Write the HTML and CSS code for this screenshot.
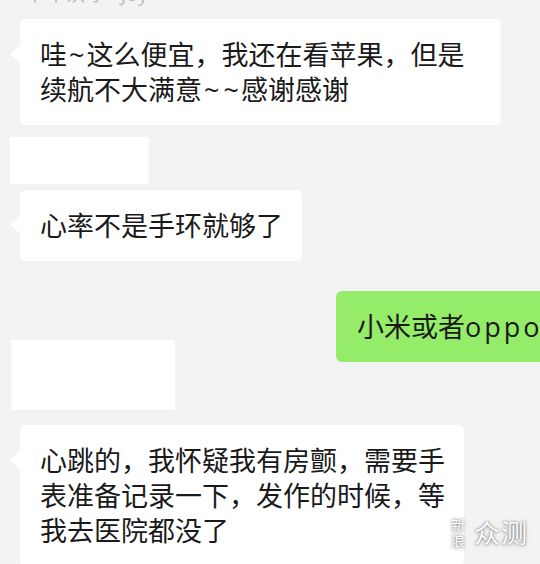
FILE: index.html
```html
<!DOCTYPE html>
<html lang="zh-CN">
<head>
  <meta charset="UTF-8">
  <meta name="viewport" content="width=device-width, initial-scale=1.0">
  <title>聊天记录</title>
  <link rel="stylesheet" href="styles.css">
</head>
<body>
  <div class="chat">
    <div class="nick">十年饮冰 · Joy</div>

    <div class="row">
      <div class="bubble bubble-roomy">哇<span class="tilde">~</span>这么便宜，我还在看苹果，但是<br>续航不大满意<span class="tilde">~</span><span class="tilde">~</span>感谢感谢</div>
    </div>

    <div class="mask mask-first"></div>

    <div class="row row-near">
      <div class="bubble">心率不是手环就够了</div>
    </div>

    <div class="row row-mixed">
      <div class="mask mask-second"></div>
      <div class="bubble bubble-mine">小米或者<span class="latin">oppo</span></div>
    </div>

    <div class="row row-last">
      <div class="bubble">心跳的，我怀疑我有房颤，需要手<br>表准备记录一下，发作的时候，等<br>我去医院都没了</div>
    </div>
  </div>

  <div class="watermark">
    <span class="wm-small">新<br>浪</span>
    <span class="wm-big">众测</span>
  </div>
</body>
</html>
```

FILE: styles.css
```css
body {
  margin: 0;
  padding: 0;
  width: 540px;
  height: 564px;
  overflow: hidden;
  background: #f3f3f3;
  font-family: "Open Sans", "Noto Sans CJK SC", sans-serif;
  color: #1a1a1a;
  position: relative;
}

.chat {
  display: flex;
  flex-direction: column;
}

.nick {
  margin-top: -17px;
  padding-left: 25px;
  font-size: 20px;
  line-height: 22px;
  color: #bdbdbd;
  white-space: nowrap;
}

.row {
  display: flex;
  align-items: flex-start;
  padding-left: 20px;
  margin-top: 14px;
}

.row-near {
  margin-top: 6px;
}

.row-mixed {
  padding-left: 11px;
  margin-top: 30px;
}

.row-last {
  margin-top: 15px;
}

.bubble {
  position: relative;
  background: #fff;
  border-radius: 6px;
  padding: 18px 19px 18px 20px;
  font-size: 27px;
  line-height: 35px;
  white-space: nowrap;
}

.bubble::before {
  content: "";
  position: absolute;
  left: -10px;
  top: 26px;
  border-top: 9px solid transparent;
  border-bottom: 9px solid transparent;
  border-right: 10px solid #fff;
}

.bubble-roomy {
  padding-right: 37px;
}

.tilde {
  margin: 0 2px;
}

.latin {
  letter-spacing: 3px;
}

.bubble-mine {
  background: #95ec69;
  margin-left: 161px;
  padding-left: 21px;
}

.bubble-mine::before {
  display: none;
}

.mask {
  background: #fff;
}

.mask-first {
  width: 139px;
  height: 47px;
  margin: 12px 0 0 10px;
}

.mask-second {
  width: 164px;
  height: 70px;
  margin-top: 49px;
  flex-shrink: 0;
}

.watermark {
  position: absolute;
  left: 451px;
  top: 516px;
  display: flex;
  align-items: center;
  gap: 9px;
  color: #fff;
  text-shadow: 0 0 2px rgba(0, 0, 0, 0.5), 0 1px 4px rgba(0, 0, 0, 0.3);
  font-family: "Noto Sans CJK SC", sans-serif;
}

.wm-small {
  font-size: 14px;
  line-height: 16px;
}

.wm-big {
  font-size: 26px;
  line-height: 30px;
  letter-spacing: 1px;
}
```
